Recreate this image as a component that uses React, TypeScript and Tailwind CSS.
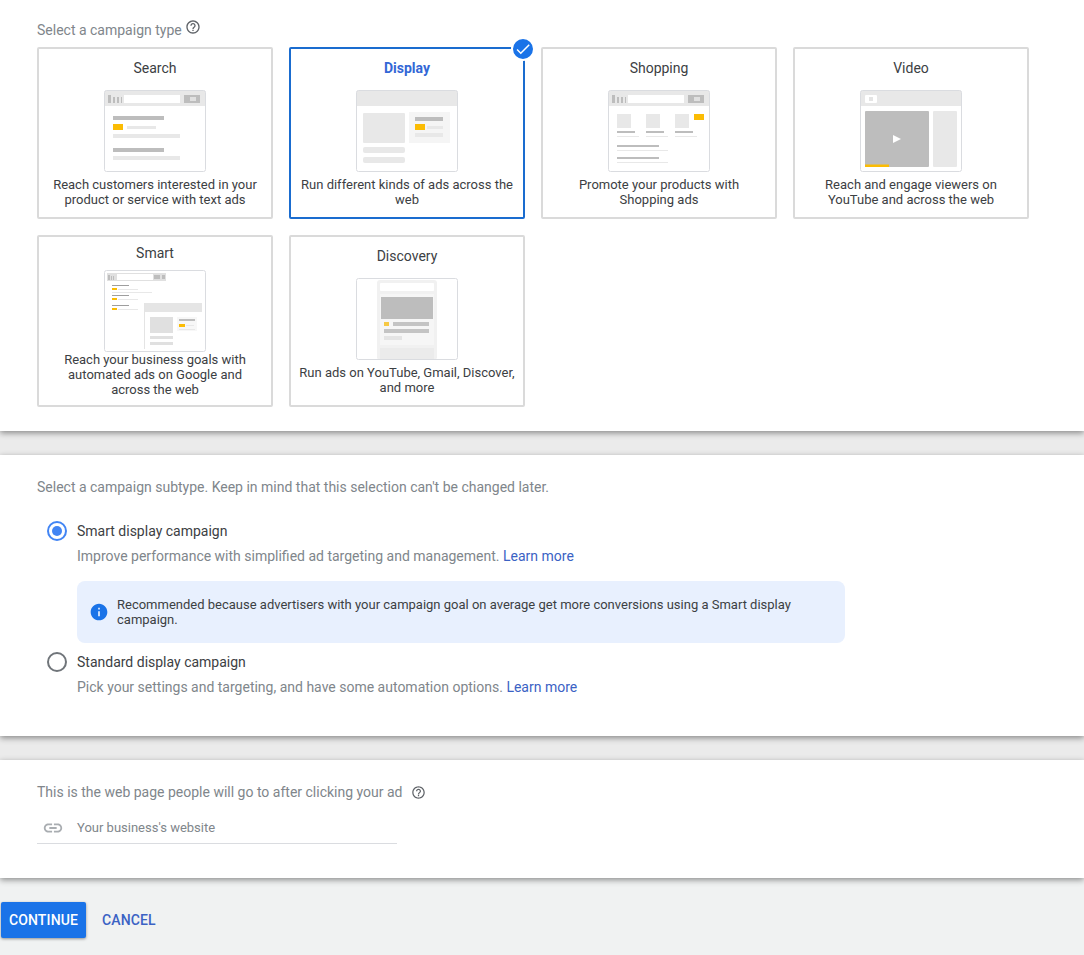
import React from "react";
import { MdHelpOutline, MdLink, MdInfo, MdCheck } from "react-icons/md";

const G = "#bdbdbd";
const L = "#e8e8e8";
const Y = "#fbbc04";

type Rc = [number, number, number, number, string, number?];

function Art({ rects, children }: { rects: Rc[]; children?: React.ReactNode }) {
  return (
    <svg width="102" height="82" viewBox="0 0 102 82" className="block shrink-0">
      <clipPath id="frameclip">
        <rect x="0.5" y="0.5" width="101" height="81" rx="2" />
      </clipPath>
      <g clipPath="url(#frameclip)">
        {rects.map(([x, y, w, h, f, r], i) => (
          <rect key={i} x={x} y={y} width={w} height={h} fill={f} rx={r ?? 0} />
        ))}
        {children}
      </g>
      <rect x="0.5" y="0.5" width="101" height="81" rx="2" fill="none" stroke="#dadce0" />
    </svg>
  );
}

const browserHead: Rc[] = [
  [0, 0, 102, 16, L],
  [4, 5, 3, 8, G],
  [9, 7, 2, 6, G],
  [13, 7, 2, 6, G],
  [17, 7, 1, 6, G],
  [20, 5, 56, 8, "#ffffff"],
  [80, 5, 16, 8, G],
  [86, 7, 6, 4, "#e0e0e0"],
];

const searchArt: Rc[] = [
  ...browserHead,
  [9, 26, 51, 4, G],
  [9, 34, 10, 6, Y],
  [23, 36, 29, 3, L],
  [9, 44, 67, 4, L],
  [9, 58, 51, 4, G],
  [9, 66, 67, 4, L],
];

const displayArt: Rc[] = [
  [0, 0, 102, 16, L],
  [7, 23, 42, 30, L, 1],
  [53, 22, 41, 31, "#f5f5f5"],
  [59, 27, 28, 4, G],
  [59, 34, 10, 6, Y],
  [71, 36, 16, 3, L],
  [59, 43, 28, 4, L],
  [7, 57, 42, 6, L, 2],
  [7, 67, 42, 6, L, 2],
];

const shoppingArt: Rc[] = [
  ...browserHead,
  [9, 24, 14, 14, L],
  [38, 24, 14, 14, L],
  [67, 24, 14, 14, L],
  [86, 24, 10, 6, Y],
  [9, 41, 18, 2, G],
  [38, 41, 18, 2, G],
  [67, 41, 18, 2, G],
  [9, 46, 22, 1, L],
  [38, 46, 22, 1, L],
  [67, 46, 22, 1, L],
  [9, 55, 42, 2, G],
  [9, 60, 51, 1, L],
  [9, 67, 42, 2, G],
  [9, 72, 51, 1, L],
];

const videoArt: Rc[] = [
  [0, 0, 102, 16, L],
  [5, 5, 12, 8, "#ffffff", 1],
  [9, 7, 4, 4, "#e4e4e4"],
  [5, 21, 64, 56, G, 1],
  [73, 21, 24, 56, L, 1],
  [5, 74.5, 24, 2.5, Y],
];

const smartArt: Rc[] = [
  [3, 3, 59, 8, "#e0e0e0"],
  [4, 5, 2, 5, G],
  [7, 6, 1, 4, G],
  [9, 6, 1, 4, G],
  [13, 4, 36, 6, "#ffffff"],
  [50, 5, 6, 4, G],
  [58, 5, 3, 4, G],
  [8, 15, 17, 1, "#9e9e9e"],
  [8, 18, 5, 2, Y],
  [14, 19, 20, 1, L],
  [8, 22, 40, 1, L],
  [8, 25, 17, 1, "#9e9e9e"],
  [8, 28, 5, 2, Y],
  [14, 29, 20, 1, L],
  [8, 35, 17, 1, "#9e9e9e"],
  [8, 38, 5, 2, Y],
  [14, 39, 20, 1, L],
  [41, 33, 57, 46, "#ffffff"],
  [40, 33, 1, 46, "#e4e4e4"],
  [41, 33, 57, 9, "#e5e5e5"],
  [46, 47, 23, 16, "#e0e0e0"],
  [73, 47, 20, 14, "#f7f7f7"],
  [75, 49, 16, 2, G],
  [75, 54, 6, 3, Y],
  [82, 55, 8, 1, L],
  [75, 59, 16, 1, L],
  [46, 66, 23, 3, "#e0e0e0"],
  [46, 72, 23, 3, "#e0e0e0"],
];

const discoveryArt: Rc[] = [
  [21, 2, 60, 80, "#f1f1f1", 3],
  [24, 5, 54, 8, "#ffffff", 1],
  [24, 16, 54, 51, "#f6f6f6"],
  [25, 19, 52, 22, G],
  [28, 44, 5, 4, "#f6c945"],
  [37, 44, 36, 4, "#c4c4c4"],
  [28, 51, 45, 4, "#c4c4c4"],
  [28, 58, 18, 4, "#e4e4e4"],
  [24, 70, 54, 12, "#ebebeb"],
];

function Card({
  title,
  desc,
  art,
  selected,
  pt = "pt-[9px]",
  artGap = "mt-3",
  descGap = "mt-[5px]",
}: {
  title: string;
  desc: React.ReactNode;
  art: React.ReactNode;
  selected?: boolean;
  pt?: string;
  artGap?: string;
  descGap?: string;
}) {
  return (
    <div
      className={`relative flex h-[172px] w-[236px] flex-col items-center rounded-[2px] border-2 bg-white ${pt} ${
        selected ? "border-[#1a6ccf]" : "border-[#dadada]"
      }`}
    >
      <div className={`text-[14px] leading-5 ${selected ? "font-bold text-[#3367d6]" : "text-[#3c4043]"}`}>{title}</div>
      <div className={artGap}>{art}</div>
      <div className={`${descGap} w-full px-2 text-center text-[13px] leading-[15px] text-[#3c4043]`}>{desc}</div>
      {selected && (
        <div className="absolute right-[-12px] top-[-12px] flex h-6 w-6 items-center justify-center rounded-full border-2 border-white bg-[#1a73e8]">
          <MdCheck className="text-white" size={18} />
        </div>
      )}
    </div>
  );
}

function Radio({ on }: { on?: boolean }) {
  return (
    <div
      className={`flex h-5 w-5 shrink-0 items-center justify-center rounded-full border-2 ${
        on ? "border-[#4285f4]" : "border-[#70757a]"
      }`}
    >
      {on && <div className="h-[10px] w-[10px] rounded-full bg-[#4285f4]" />}
    </div>
  );
}

function Section({ h, children, mt }: { h: string; children: React.ReactNode; mt?: string }) {
  return (
    <section className={`relative ${h} ${mt ?? ""} bg-white px-[37px] shadow-[0_2px_6px_rgba(0,0,0,0.42)]`}>
      {children}
    </section>
  );
}

export default function App() {
  return (
    <div
      className="flex h-[955px] w-full flex-col overflow-hidden bg-[#ebebeb] text-[14px] text-[#80868b]"
      style={{ fontFamily: 'Roboto, "Liberation Sans", sans-serif' }}
    >
      <Section h="h-[431px]">
        <div className="flex h-[47px] items-start pt-[20px]">
          <span className="leading-5">Select a campaign type</span>
          <MdHelpOutline className="ml-[3px] mt-[-1px] text-[#5f6368]" size={16} />
        </div>
        <div className="grid w-[992px] grid-cols-[repeat(4,236px)] gap-4">
          <Card
            title="Search"
            art={<Art rects={searchArt} />}
            desc={<>Reach customers interested in your<br />product or service with text ads</>}
          />
          <Card
            selected
            title="Display"
            art={<Art rects={displayArt} />}
            desc={<>Run different kinds of ads across the web</>}
          />
          <Card
            title="Shopping"
            art={<Art rects={shoppingArt} />}
            desc={<>Promote your products with<br />Shopping ads</>}
          />
          <Card
            title="Video"
            art={
              <Art rects={videoArt}>
                <polygon points="33,45 41,49 33,53" fill="#ffffff" />
              </Art>
            }
            desc={<>Reach and engage viewers on<br />YouTube and across the web</>}
          />
          <Card
            title="Smart"
            pt="pt-[6px]"
            artGap="mt-[7px]"
            descGap="mt-0"
            art={<Art rects={smartArt} />}
            desc={<>Reach your business goals with<br />automated ads on Google and<br />across the web</>}
          />
          <Card
            title="Discovery"
            art={<Art rects={discoveryArt} />}
            desc={<>Run ads on YouTube, Gmail, Discover,<br />and more</>}
          />
        </div>
      </Section>

      <Section h="h-[281px]" mt="mt-6">
        <div className="pt-[22px] leading-5">Select a campaign subtype. Keep in mind that this selection can't be changed later.</div>
        <div className="mt-[24px] flex items-center gap-[10px] pl-[10px]">
          <Radio on />
          <span className="leading-5 text-[#3c4043]">Smart display campaign</span>
        </div>
        <div className="mt-[5px] pl-10 leading-5">
          Improve performance with simplified ad targeting and management.{" "}
          <span className="text-[#3b62c4]">Learn more</span>
        </div>
        <div className="ml-10 mt-[15px] flex h-[62px] w-[768px] items-center gap-2 rounded-lg bg-[#e8f0fe] pl-[12px] pr-12">
          <MdInfo className="shrink-0 text-[#1a73e8]" size={20} />
          <span className="text-[13px] leading-[15px] text-[#3c4043]">
            Recommended because advertisers with your campaign goal on average get more conversions using a Smart display campaign.
          </span>
        </div>
        <div className="mt-[9px] flex items-center gap-[10px] pl-[10px]">
          <Radio />
          <span className="leading-5 text-[#3c4043]">Standard display campaign</span>
        </div>
        <div className="mt-[5px] pl-10 leading-5">
          Pick your settings and targeting, and have some automation options.{" "}
          <span className="text-[#3b62c4]">Learn more</span>
        </div>
      </Section>

      <Section h="h-[118px]" mt="mt-6">
        <div className="flex items-center pt-[22px]">
          <span className="leading-5">This is the web page people will go to after clicking your ad</span>
          <MdHelpOutline className="ml-[8px] text-[#5f6368]" size={15} />
        </div>
        <div className="mt-[11px] flex h-[31px] w-[360px] items-center border-b border-[#dadce0] pb-[1px] pl-[5px]">
          <MdLink className="text-[#a9adb1]" size={22} />
          <span className="ml-[13px] text-[13px] text-[#80868b]">Your business's website</span>
        </div>
      </Section>

      <footer className="flex flex-1 items-start bg-[#f0f2f2] pl-px pt-6">
        <button className="flex h-9 w-[85px] items-center justify-center rounded-[2px] bg-[#1a73e8] text-[14px] font-medium tracking-[0.01em] text-white shadow-[0_1px_3px_rgba(0,0,0,0.4)]">
          CONTINUE
        </button>
        <button className="ml-4 flex h-9 items-center text-[14px] font-medium tracking-[0.01em] text-[#3b62c4]">CANCEL</button>
      </footer>
    </div>
  );
}
